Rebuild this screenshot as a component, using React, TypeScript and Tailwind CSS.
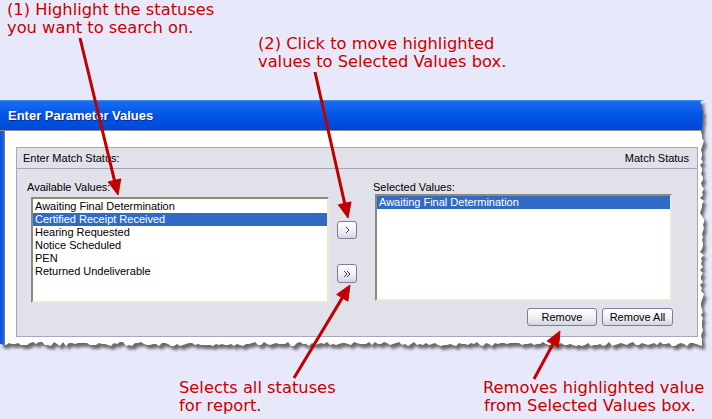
import React from "react";

const available = [
  "Awaiting Final Determination",
  "Certified Receipt Received",
  "Hearing Requested",
  "Notice Scheduled",
  "PEN",
  "Returned Undeliverable",
];

// deterministic noise for the torn paper edge
function noise(i: number) {
  const v = Math.sin(i * 12.9898) * 43758.5453;
  return v - Math.floor(v);
}

function tornEdge(right: number, bottom: number) {
  const pts: string[] = ["0px 0px", `${right + 2}px 0px`];
  for (let y = 2; y < bottom; y += 3) {
    pts.push(`${right + Math.round(noise(y) * 4) - 2}px ${y}px`);
  }
  for (let x = right; x > 4; x -= 3) {
    pts.push(`${x}px ${bottom + Math.round(noise(x + 500) * 4) - 2}px`);
  }
  pts.push(`0px ${bottom}px`);
  return pts;
}

const edge = tornEdge(702, 244);

const arrows = [
  { from: [80, 38], to: [118, 195] },
  { from: [315, 72], to: [348, 218] },
  { from: [294, 378], to: [350, 285] },
  { from: [534, 379], to: [560, 331] },
];

function Arrow({ from, to }: { from: number[]; to: number[] }) {
  const dx = to[0] - from[0];
  const dy = to[1] - from[1];
  const len = Math.hypot(dx, dy);
  const ux = dx / len;
  const uy = dy / len;
  const bx = to[0] - ux * 15;
  const by = to[1] - uy * 15;
  const px = -uy * 6.5;
  const py = ux * 6.5;
  return (
    <g fill="#c00000" stroke="#c00000">
      <line x1={from[0]} y1={from[1]} x2={bx + ux * 2} y2={by + uy * 2} strokeWidth={3} />
      <polygon points={`${to[0]},${to[1]} ${bx + px},${by + py} ${bx - px},${by - py}`} strokeWidth={1} />
    </g>
  );
}

function Chevron({ double }: { double?: boolean }) {
  return (
    <svg width="10" height="8" viewBox="0 0 10 8">
      {double ? (
        <>
          <polyline points="2,1 5,4 2,7" fill="none" stroke="#3c3c50" strokeWidth="1" />
          <polyline points="5,1 8,4 5,7" fill="none" stroke="#3c3c50" strokeWidth="1" />
        </>
      ) : (
        <polyline points="4,1 7,4 4,7" fill="none" stroke="#3c3c50" strokeWidth="1" />
      )}
    </svg>
  );
}

function XpButton({ children, className }: { children: React.ReactNode; className: string }) {
  return (
    <button className={`flex items-center justify-center rounded-[3px] border border-[#7c7c9c] bg-linear-to-b from-white via-[#f2f2f6] to-[#d5d5e1] text-[11px] text-black ${className}`}>
      {children}
    </button>
  );
}

export default function App() {
  return (
    <div className="relative h-[419px] w-[712px] overflow-hidden bg-[#e7e9fb] font-['Liberation_Sans',Arial,sans-serif]">
      {/* top notes */}
      <div className="flex h-[100px] font-['DejaVu_Sans',Verdana,sans-serif] text-[16.3px] leading-[18px] text-[#c80000]">
        <div className="w-[258px] pl-[7px] pt-[1px]">
          <p>(1) Highlight the statuses</p>
          <p>you want to search on.</p>
        </div>
        <div className="pt-[35px]">
          <p>(2) Click to move highlighted</p>
          <p>values to Selected Values box.</p>
        </div>
      </div>

      {/* torn edge shadow */}
      <svg className="absolute left-0 top-[100px] z-0" width="712" height="260" overflow="visible">
        <defs>
          <filter id="sh" x="-5%" y="-5%" width="110%" height="120%">
            <feGaussianBlur stdDeviation="1.6" />
          </filter>
        </defs>
        <polygon
          transform="translate(3,4)"
          filter="url(#sh)"
          fill="#555"
          opacity="0.85"
          points={edge.map((p) => p.replace(/px/g, "").replace(" ", ",")).join(" ")}
        />
      </svg>

      {/* dialog window */}
      <div className="relative z-[1] h-[248px] w-[708px]" style={{ clipPath: `polygon(${edge.join(",")})` }}>
        <div className="flex h-[30px] items-center border-t border-[#3d8ff7] bg-linear-to-b from-[#1d6cf0] via-[#0055e4] to-[#0048d6] pl-[8px] text-[13px] font-bold text-white [text-shadow:1px_1px_#0c2a8a]">
          Enter Parameter Values
        </div>
        <div className="h-px bg-[#8c8c9a]" />
        <div className="flex h-[217px]">
          <div className="w-[4px] bg-linear-to-r from-[#0a4fd8] to-[#1b66f0]" />
          <div className="w-px bg-[#77756a]" />
          <div className="flex-1 bg-white pl-[11px] pt-[16px]">
            <div className="w-[682px] border border-[#a6a6be] bg-[#e1e1ea]">
              <div className="flex h-[21px] items-center justify-between border-b border-[#a6a6be] px-[6px] pr-[8px] text-[11px] text-black">
                <span>Enter Match Status:</span>
                <span>Match Status</span>
              </div>
              <div className="flex h-[167px] pt-[11px] text-[11px] leading-[14px] text-black">
                <div className="pl-[10px]">
                  <div>Available Values:</div>
                  <div className="ml-[4px] mt-[3px] h-[106px] w-[298px] border-2 border-b-[#ece9d8] border-l-[#8d8a7a] border-r-[#ece9d8] border-t-[#8d8a7a] bg-white pt-px">
                    {available.map((v) => (
                      <div
                        key={v}
                        className={`h-[13px] pl-[2px] leading-[13px] ${v === "Certified Receipt Received" ? "bg-[#316ac5] text-white" : ""}`}
                      >
                        {v}
                      </div>
                    ))}
                  </div>
                </div>
                <div className="ml-[8px] flex flex-col">
                  <XpButton className="mt-[41px] h-[18px] w-[20px]">
                    <Chevron />
                  </XpButton>
                  <XpButton className="mt-[25px] h-[19px] w-[20px]">
                    <Chevron double />
                  </XpButton>
                </div>
                <div className="ml-[16px]">
                  <div>Selected Values:</div>
                  <div className="ml-[2px] h-[107px] w-[297px] border-2 border-b-[#ece9d8] border-l-[#8d8a7a] border-r-[#ece9d8] border-t-[#8d8a7a] bg-white">
                    <div className="h-[13px] bg-[#316ac5] pl-[2px] leading-[13px] text-white">Awaiting Final Determination</div>
                  </div>
                  <div className="ml-[2px] mt-[7px] flex w-[298px] justify-end gap-[5px]">
                    <XpButton className="h-[18px] w-[70px]">Remove</XpButton>
                    <XpButton className="h-[18px] w-[71px]">Remove All</XpButton>
                  </div>
                </div>
              </div>
            </div>
          </div>
        </div>
      </div>

      {/* bottom notes */}
      <div className="flex pl-[179px] pt-[31px] font-['DejaVu_Sans',Verdana,sans-serif] text-[16.3px] leading-[18px] text-[#c80000]">
        <div className="w-[304px]">
          <p>Selects all statuses</p>
          <p>for report.</p>
        </div>
        <div>
          <p>Removes highlighted value</p>
          <p className="pl-px">from Selected Values box.</p>
        </div>
      </div>

      {/* callout arrows */}
      <svg className="pointer-events-none absolute left-0 top-0 z-[2]" width="712" height="419">
        {arrows.map((a, i) => (
          <Arrow key={i} from={a.from} to={a.to} />
        ))}
      </svg>
    </div>
  );
}
